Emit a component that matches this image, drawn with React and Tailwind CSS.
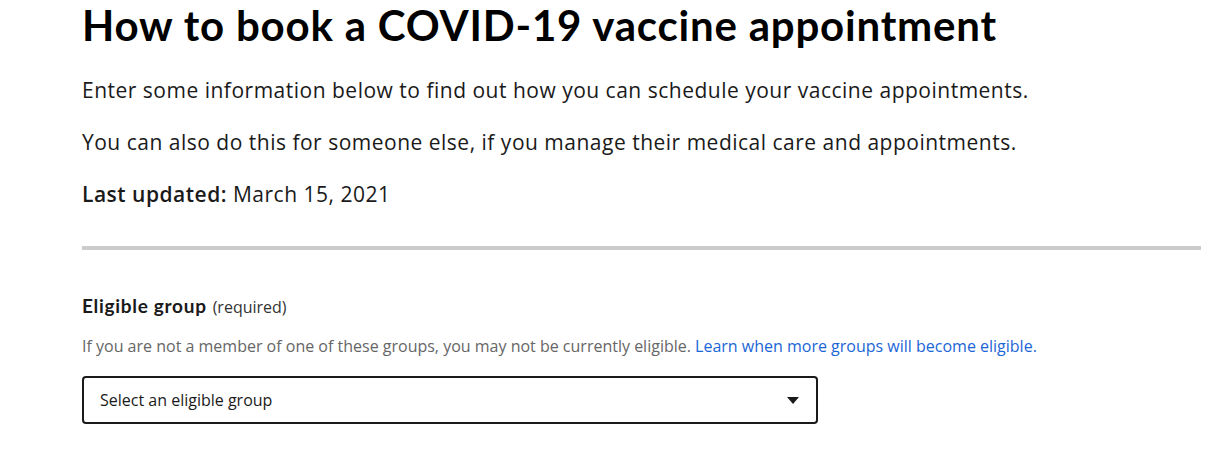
export default function App() {
  return (
    <div className="bg-white min-h-screen pl-[82px] pr-[7px] pt-[4px] text-[#1a1a1a] font-['Open_Sans',sans-serif]">
      <h1 className="font-['Lato',sans-serif] font-bold text-[42px] leading-[42px] tracking-[0.8px] text-black">
        How to book a COVID-19 vaccine appointment
      </h1>
      <p className="mt-[30px] text-[21px] leading-[28px] tracking-[0.5px]">
        Enter some information below to find out how you can schedule your vaccine appointments.
      </p>
      <p className="mt-[24px] text-[21px] leading-[28px] tracking-[0.5px]">
        You can also do this for someone else, if you manage their medical care and appointments.
      </p>
      <p className="mt-[24px] text-[21px] leading-[28px] tracking-[0.5px]">
        <span className="font-semibold">Last updated:</span> March 15, 2021
      </p>
      <div className="mt-[38px] h-[4px] bg-[#cccccc]" />
      <div className="mt-[44px] flex items-baseline gap-[6px]">
        <span className="font-['Lato',sans-serif] font-bold text-[19px] leading-[24px] tracking-[0.7px]">Eligible group</span>
        <span className="text-[16px] text-[#333]">(required)</span>
      </div>
      <p className="mt-[15px] text-[16px] leading-[24px] text-[#666666]">
        If you are not a member of one of these groups, you may not be currently eligible.{" "}
        <a className="text-[#1a66d6]">Learn when more groups will become eligible.</a>
      </p>
      <div className="mt-[18px] w-[736px] h-[48px] border-2 border-[#1a1a1a] rounded-[4px] flex items-center justify-between pl-[16px] pr-[17px]">
        <span className="text-[16px]">Select an eligible group</span>
        <svg width="12" height="7" viewBox="0 0 12 7">
          <path d="M0 0h12L6 7z" fill="#1a1a1a" />
        </svg>
      </div>
    </div>
  );
}
